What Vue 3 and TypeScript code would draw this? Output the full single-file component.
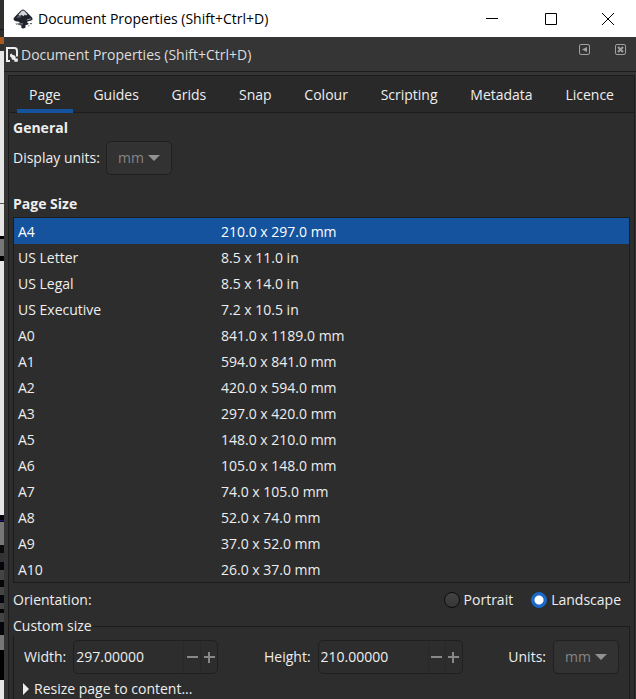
<script setup lang="ts">
import { ref } from 'vue'

interface PageSize {
  name: string
  size: string
}

const tabs: string[] = ['Page', 'Guides', 'Grids', 'Snap', 'Colour', 'Scripting', 'Metadata', 'Licence']
const activeTab = ref('Page')

const pageSizes: PageSize[] = [
  { name: 'A4', size: '210.0 x 297.0 mm' },
  { name: 'US Letter', size: '8.5 x 11.0 in' },
  { name: 'US Legal', size: '8.5 x 14.0 in' },
  { name: 'US Executive', size: '7.2 x 10.5 in' },
  { name: 'A0', size: '841.0 x 1189.0 mm' },
  { name: 'A1', size: '594.0 x 841.0 mm' },
  { name: 'A2', size: '420.0 x 594.0 mm' },
  { name: 'A3', size: '297.0 x 420.0 mm' },
  { name: 'A5', size: '148.0 x 210.0 mm' },
  { name: 'A6', size: '105.0 x 148.0 mm' },
  { name: 'A7', size: '74.0 x 105.0 mm' },
  { name: 'A8', size: '52.0 x 74.0 mm' },
  { name: 'A9', size: '37.0 x 52.0 mm' },
  { name: 'A10', size: '26.0 x 37.0 mm' },
]
const selected = ref('A4')
const orientation = ref('landscape')
const width = ref('297.00000')
const height = ref('210.00000')

function step(value: string, delta: number): string {
  return Math.max(0, Number(value) + delta).toFixed(5)
}
</script>

<template>
  <div class="desktop">
    <div class="behind"></div>
    <main class="window">
      <header class="titlebar">
        <svg class="logo" viewBox="0 0 20 20" aria-hidden="true">
          <path d="M10 0.4 C11 0.4 12 1.4 13 2.5 L18.6 8.1 C20.6 10.4 19.4 11.3 16.4 12 C14.6 12.4 13.6 12.8 14.2 13.5 C14.8 14.2 16 14.2 15.6 15 C15 16 12.8 15.8 12.4 16.6 C12 17.5 13.2 17.8 12.4 18.5 C11.4 19.6 9.2 19.8 8.4 18.7 C7.8 17.9 9 17.3 8.2 16.6 C7.2 15.8 4.4 16 4.3 15 C4.2 14.2 6.6 14.4 6.8 13.6 C7 12.6 3 12.6 1.4 11.4 C0 10.4 0.4 9.2 1.6 8.1 L7 2.5 C8 1.4 9 0.4 10 0.4 Z" fill="#20232b" />
          <path d="M10 1.6 C10.8 1.6 11.6 2.5 12.4 3.3 L14.4 5.4 L13 6.6 L11.7 5.8 L10.4 7.2 L8.6 5.8 L7 7 L5.4 5.7 L7.7 3.3 C8.5 2.4 9.2 1.6 10 1.6 Z" fill="#d4d7de" />
          <path d="M5.2 6.2 L7 7.6 L8.4 6.6 L8 8.6 L3.4 9 Z" fill="#596070" />
          <path d="M13.8 11 L18 9.8 M5 14.9 H10" stroke="#8d93a0" stroke-width="1" fill="none" />
          <path d="M2.4 14.4 l2 .4 -1 1z M16.6 14.4 l2.4 -.6 -.8 1.6 z M15 16.4 l1.6 .2 -1 .9z" fill="#20232b" />
        </svg>
        <h1 class="title">Document Properties (Shift+Ctrl+D)</h1>
        <div class="window-buttons">
          <button type="button" aria-label="Minimise"><svg viewBox="0 0 12 12"><path d="M0 5.5H12" /></svg></button>
          <button type="button" aria-label="Maximise"><svg viewBox="0 0 12 12"><path d="M.5 .5H11.5V11.5H.5Z" /></svg></button>
          <button type="button" aria-label="Close"><svg viewBox="0 0 12 12"><path d="M0 0L12 12M12 0L0 12" /></svg></button>
        </div>
      </header>

      <div class="dock-header">
        <svg class="doc-icon" viewBox="0 0 12 15" aria-hidden="true">
          <path d="M4 14H1V1H8.5C10.3 1 11 2.4 11 4.2V9.5" fill="none" stroke="#eee" stroke-width="2" />
          <path d="M4 7.6L5.6 6.6L6.6 8L8.4 8.2L9.6 9.8V11.4H11.8V14.8H8.4L8.2 13L5.8 12.6L5.6 10.8L4 9.6Z" fill="#eee" />
        </svg>
        <h2 class="dock-title">Document Properties (Shift+Ctrl+D)</h2>
        <div class="dock-buttons">
          <button type="button" aria-label="Iconify this dock">
            <svg viewBox="0 0 11 11"><rect x=".5" y=".5" width="10" height="10" rx="1.5" /><path class="solid" d="M8 3V8L3 5.5Z" /></svg>
          </button>
          <button type="button" aria-label="Close this dock">
            <svg viewBox="0 0 11 11"><rect x=".5" y=".5" width="10" height="10" rx="1.5" /><path class="cross" d="M3 3L8 8M8 3L3 8" /></svg>
          </button>
        </div>
      </div>

      <section class="notebook">
        <nav class="tabs" role="tablist">
          <button
            v-for="tab in tabs"
            :key="tab"
            type="button"
            role="tab"
            class="tab"
            :class="{ active: tab === activeTab }"
            :aria-selected="tab === activeTab"
            @click="activeTab = tab"
          >{{ tab }}</button>
        </nav>

        <div class="page">
          <h3 class="heading">General</h3>
          <div class="units-row">
            <label for="display-units">Display units:</label>
            <span class="combo">
              <select id="display-units" disabled><option>mm</option></select>
              <svg viewBox="0 0 12 6" aria-hidden="true"><path d="M0 0H12L6 6Z" /></svg>
            </span>
          </div>

          <h3 class="heading">Page Size</h3>
          <table class="sizes">
            <tbody>
              <tr v-for="p in pageSizes" :key="p.name" :class="{ selected: p.name === selected }" @click="selected = p.name">
                <td class="name">{{ p.name }}</td>
                <td>{{ p.size }}</td>
              </tr>
            </tbody>
          </table>

          <div class="orientation">
            <span>Orientation:</span>
            <div class="radios">
              <label><input v-model="orientation" type="radio" name="orientation" value="portrait" />Portrait</label>
              <label><input v-model="orientation" type="radio" name="orientation" value="landscape" />Landscape</label>
            </div>
          </div>

          <fieldset class="custom">
            <legend>Custom size</legend>
            <div class="dims">
              <div class="field">
                <label for="page-width">Width:</label>
                <div class="spin">
                  <input id="page-width" v-model="width" type="text" />
                  <button type="button" aria-label="Decrease width" @click="width = step(width, -1)"><svg viewBox="0 0 11 11"><path d="M0 5H11" /></svg></button>
                  <button type="button" aria-label="Increase width" @click="width = step(width, 1)"><svg viewBox="0 0 11 11"><path d="M0 5H11M5 0V11" /></svg></button>
                </div>
              </div>
              <div class="field">
                <label for="page-height">Height:</label>
                <div class="spin">
                  <input id="page-height" v-model="height" type="text" />
                  <button type="button" aria-label="Decrease height" @click="height = step(height, -1)"><svg viewBox="0 0 11 11"><path d="M0 5H11" /></svg></button>
                  <button type="button" aria-label="Increase height" @click="height = step(height, 1)"><svg viewBox="0 0 11 11"><path d="M0 5H11M5 0V11" /></svg></button>
                </div>
              </div>
              <div class="field">
                <label for="custom-units">Units:</label>
                <span class="combo">
                  <select id="custom-units" disabled><option>mm</option></select>
                  <svg viewBox="0 0 12 6" aria-hidden="true"><path d="M0 0H12L6 6Z" /></svg>
                </span>
              </div>
            </div>
            <button type="button" class="expander">
              <svg viewBox="0 0 6 12" aria-hidden="true"><path d="M0 0L6 6L0 12Z" /></svg>
              Resize page to content...
            </button>
          </fieldset>
        </div>
      </section>
    </main>
  </div>
</template>

<style>
body {
  margin: 0;
  background: #2d2d2d;
}
</style>

<style scoped>
* {
  box-sizing: border-box;
}

.desktop {
  display: grid;
  grid-template-columns: 4px 1fr;
  height: 100vh;
  overflow: hidden;
  font: 14px/20px "Open Sans", "Noto Sans", sans-serif;
  color: #eee;
}

/* Sliver of the window underneath */
.behind {
  background: linear-gradient(
    #302f2e 0 29px, #181818 29px 30px, #302f2e 30px 37px, #a85a20 37px 44px, #302f2e 44px 51px,
    #e6e6e6 51px 203px, #555 203px 204px, #e6e6e6 204px 236px, #000 236px 239px, #777 239px 256px,
    #000 256px 261px, #e6e6e6 261px 515px, #05050c 515px 520px, #151580 520px 521px, #05050c 521px 522px,
    #777 522px 545px, #0a0a0a 545px 553px, #333 553px 562px, #05050c 562px 570px, #444 570px 580px,
    #05050c 580px 587px, #444 587px 595px, #05050c 595px 603px, #444 603px 609px, #05050c 609px 613px,
    #444 613px 622px, #05050c 622px 635px, #777 635px 650px, #000 650px 680px, #e6e6e6 680px
  );
}

.window {
  display: flex;
  flex-direction: column;
  min-width: 0;
  background: #353535;
}

button {
  margin: 0;
  padding: 0;
  border: 0;
  background: none;
  color: inherit;
  font: inherit;
}

h1, h2, h3 {
  margin: 0;
  font: inherit;
}

.titlebar {
  display: flex;
  align-items: center;
  height: 37px;
  flex: none;
  padding-left: 9px;
  background: #fff;
  color: #000;
}

.logo {
  width: 20px;
  height: 20px;
  margin-right: 5px;
}

.window-buttons {
  display: flex;
  margin-left: auto;
}

.window-buttons button {
  display: grid;
  place-items: center;
  width: 59px;
  height: 36px;
}

.window-buttons button:last-child {
  width: 56px;
}

.window-buttons svg {
  width: 12px;
  height: 12px;
  fill: none;
  stroke: #000;
  stroke-width: 1;
}

.dock-header {
  display: flex;
  align-items: center;
  flex: none;
  height: 35px;
  padding: 1px 10px 0 2px;
  border-bottom: 1px solid #1c1c1c;
}

.doc-icon {
  width: 12px;
  height: 15px;
  margin-right: 3px;
}

.dock-title {
  color: #ddd;
}

.dock-buttons {
  display: flex;
  align-self: flex-start;
  gap: 25px;
  margin-left: auto;
  padding-top: 6px;
}

.dock-buttons button,
.dock-buttons svg {
  display: block;
  width: 11px;
  height: 11px;
}

.dock-buttons svg {
  fill: none;
  stroke: #a0a0a0;
}

.dock-buttons .solid {
  fill: #a0a0a0;
  stroke: none;
}

.dock-buttons .cross {
  stroke-width: 2;
}

.notebook {
  flex: 1;
  min-height: 0;
  margin: 3px 1px 0 4px;
  border: 1px solid #1c1c1c;
  border-bottom: 0;
  background: #2d2d2d;
}

.tabs {
  display: flex;
  justify-content: space-between;
  height: 37px;
  padding: 0 8px;
  border-bottom: 1px solid #1c1c1c;
  background: #292929;
}

.tab {
  height: 37px;
  padding: 4px 12px 0;
  border-bottom: 4px solid transparent;
}

.tab.active {
  border-bottom-color: #15539e;
}

.page {
  padding: 5px 4px 0;
}

.heading {
  font-weight: 700;
}

.units-row {
  display: flex;
  align-items: center;
  gap: 6px;
  margin: 3px 0 19px;
}

.combo {
  display: grid;
  align-items: center;
}

.combo select,
.combo svg {
  grid-area: 1 / 1;
}

.combo select {
  width: 66px;
  height: 34px;
  padding: 0 0 0 11px;
  appearance: none;
  border: 1px solid #202020;
  border-radius: 5px;
  background: #323232;
  color: #858585;
  opacity: 1;
  font: inherit;
}

.combo svg {
  justify-self: end;
  width: 12px;
  height: 6px;
  margin-right: 12px;
  fill: #929292;
  pointer-events: none;
}

.sizes {
  width: 100%;
  margin-top: 3px;
  border: 1px solid #1c1c1c;
  border-collapse: separate;
  border-spacing: 0;
  table-layout: fixed;
}

.sizes td {
  height: 26px;
  padding: 1px 4px 0;
}

.sizes .name {
  width: 203px;
}

.sizes .selected {
  background: #15539e;
  color: #fff;
}

.orientation {
  display: flex;
  justify-content: space-between;
  align-items: center;
  height: 33px;
  padding-right: 9px;
}

.radios {
  display: flex;
  gap: 18px;
}

.radios label {
  display: flex;
  align-items: center;
  gap: 4px;
}

.radios input {
  width: 16px;
  height: 16px;
  margin: 0;
  appearance: none;
  border: 1px solid #0c0c0c;
  border-radius: 50%;
  background: linear-gradient(#434343, #363636);
}

.radios input:checked {
  border-color: #1b6acb;
  background: radial-gradient(circle, #fff 0 4px, #1b6acb 5px);
}

.custom {
  min-width: 0;
  margin: 0;
  padding: 4px 10px 60px;
  border: 1px solid #1c1c1c;
}

.custom legend {
  margin-left: -11px;
  padding: 0;
}

.dims {
  display: flex;
  justify-content: space-between;
}

.field {
  display: flex;
  align-items: center;
  gap: 7px;
}

.spin {
  display: flex;
  width: 145px;
  height: 34px;
  border: 1px solid #202020;
  border-radius: 5px;
}

.spin input {
  flex: 1;
  min-width: 0;
  padding: 0 2px;
  border: 0;
  outline: 0;
  background: none;
  color: #eee;
  font: inherit;
}

.spin button {
  display: grid;
  place-items: center;
  width: 17px;
  border-left: 1px solid #282828;
}

.spin svg {
  width: 11px;
  height: 11px;
  fill: none;
  stroke: #888;
  stroke-width: 2;
}

.expander {
  display: flex;
  align-items: center;
  gap: 5px;
  margin-top: 5px;
  margin-left: -1px;
}

.expander svg {
  width: 6px;
  height: 12px;
  fill: #eee;
}
</style>
